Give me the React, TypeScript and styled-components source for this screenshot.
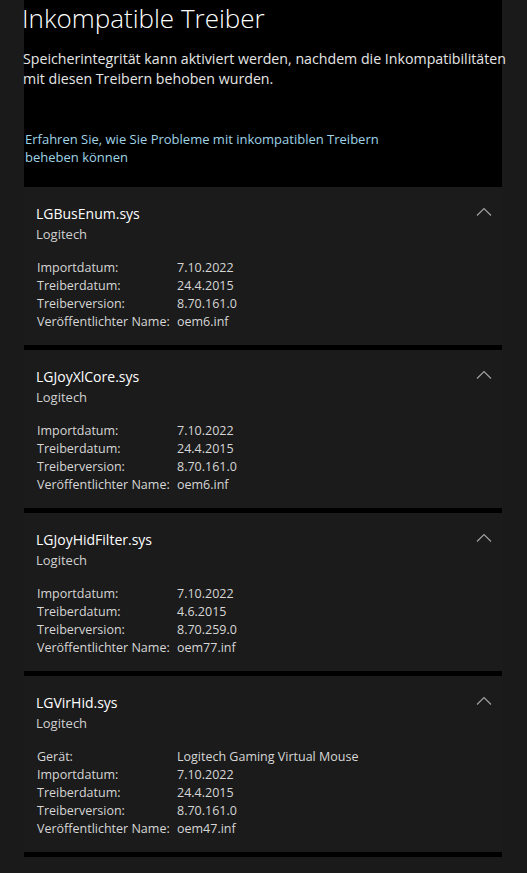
import React from "react";
import styled, { createGlobalStyle } from "styled-components";

const Global = createGlobalStyle`
  html, body { margin: 0; padding: 0; background: #1a1a1a; }
  body { font-family: "Open Sans", "Noto Sans", sans-serif; }
`;

const Page = styled.div`
  width: 527px;
  min-height: 873px;
  background: #1a1a1a;
  overflow: hidden;
`;

const Column = styled.div`
  margin-left: 24px;
  width: 478px;
  background: #000;
  padding-bottom: 5px;
  display: flex;
  flex-direction: column;
`;

const Header = styled.header`
  display: flex;
  flex-direction: column;
  height: 187px;
`;

const Title = styled.h1`
  margin: 0 0 0 -2px;
  font-size: 26px;
  font-weight: 300;
  line-height: 36px;
  color: #ffffff;
  white-space: nowrap;
`;

const Intro = styled.p`
  margin: 13px 0 0 -1px;
  font-size: 14.2px;
  line-height: 20px;
  color: #e6e6e6;
  white-space: nowrap;
`;

const LearnLink = styled.a`
  margin: 41px 0 0 1px;
  font-size: 13px;
  line-height: 18px;
  color: #9fd3e6;
  text-decoration: none;
  width: 380px;
`;

const List = styled.div`
  display: flex;
  flex-direction: column;
  gap: 5px;
`;

const Card = styled.section`
  background: #1b1b1b;
  padding: 17px 10px 14px 12px;
  display: flex;
  flex-direction: column;
`;

const CardTop = styled.div`
  display: flex;
  justify-content: space-between;
  align-items: flex-start;
`;

const Names = styled.div`
  display: flex;
  flex-direction: column;
`;

const DriverName = styled.div`
  font-size: 14px;
  line-height: 20px;
  color: #ffffff;
`;

const Vendor = styled.div`
  font-size: 13px;
  line-height: 20px;
  color: #d0d0d0;
`;

const Chevron = styled.svg`
  margin-top: 3px;
  width: 16px;
  height: 10px;
`;

const Details = styled.dl`
  margin: 15px 0 0 1px;
  display: grid;
  grid-template-columns: 140px 1fr;
  font-size: 12.5px;
  line-height: 18px;
  color: #d6d6d6;
`;

const Label = styled.dt`
  margin: 0;
`;

const Value = styled.dd`
  margin: 0;
`;

type Driver = {
  name: string;
  rows: [string, string][];
};

const drivers: Driver[] = [
  {
    name: "LGBusEnum.sys",
    rows: [
      ["Importdatum:", "7.10.2022"],
      ["Treiberdatum:", "24.4.2015"],
      ["Treiberversion:", "8.70.161.0"],
      ["Veröffentlichter Name:", "oem6.inf"],
    ],
  },
  {
    name: "LGJoyXlCore.sys",
    rows: [
      ["Importdatum:", "7.10.2022"],
      ["Treiberdatum:", "24.4.2015"],
      ["Treiberversion:", "8.70.161.0"],
      ["Veröffentlichter Name:", "oem6.inf"],
    ],
  },
  {
    name: "LGJoyHidFilter.sys",
    rows: [
      ["Importdatum:", "7.10.2022"],
      ["Treiberdatum:", "4.6.2015"],
      ["Treiberversion:", "8.70.259.0"],
      ["Veröffentlichter Name:", "oem77.inf"],
    ],
  },
  {
    name: "LGVirHid.sys",
    rows: [
      ["Gerät:", "Logitech Gaming Virtual Mouse"],
      ["Importdatum:", "7.10.2022"],
      ["Treiberdatum:", "24.4.2015"],
      ["Treiberversion:", "8.70.161.0"],
      ["Veröffentlichter Name:", "oem47.inf"],
    ],
  },
];

export default function App() {
  return (
    <Page>
      <Global />
      <Column>
        <Header>
          <Title>Inkompatible Treiber</Title>
          <Intro>
            Speicherintegrität kann aktiviert werden, nachdem die Inkompatibilitäten
            <br />
            mit diesen Treibern behoben wurden.
          </Intro>
          <LearnLink href="#">
            Erfahren Sie, wie Sie Probleme mit inkompatiblen Treibern beheben können
          </LearnLink>
        </Header>
        <List>
          {drivers.map((d) => (
            <Card key={d.name}>
              <CardTop>
                <Names>
                  <DriverName>{d.name}</DriverName>
                  <Vendor>Logitech</Vendor>
                </Names>
                <Chevron viewBox="0 0 16 10">
                  <path d="M1 8.5 L8 1.5 L15 8.5" fill="none" stroke="#a0a0a0" strokeWidth="1.2" />
                </Chevron>
              </CardTop>
              <Details>
                {d.rows.map(([k, v]) => (
                  <React.Fragment key={k}>
                    <Label>{k}</Label>
                    <Value>{v}</Value>
                  </React.Fragment>
                ))}
              </Details>
            </Card>
          ))}
        </List>
      </Column>
    </Page>
  );
}
